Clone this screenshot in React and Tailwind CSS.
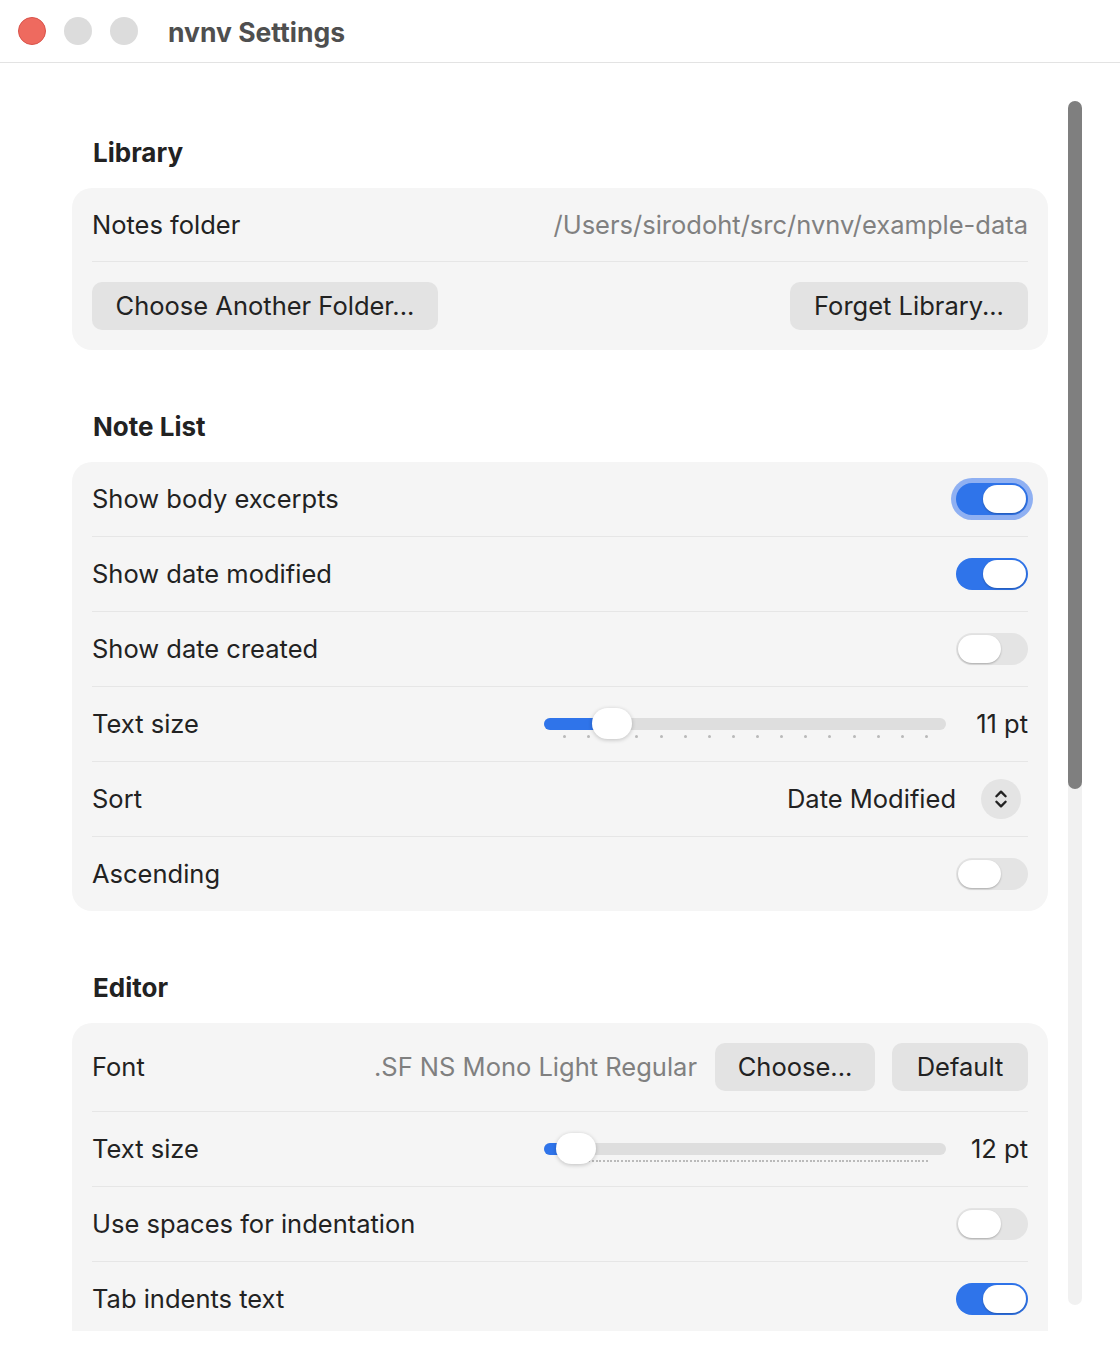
import { ChevronsUpDown } from 'lucide-react';

const font = { fontFamily: 'Inter, "Noto Sans", sans-serif' };

// the switch keeps a 5px box for its focus ring, pulled back with a negative margin
const Toggle = ({ on, focused }) => (
  <div className={`-m-[5px] rounded-full p-[5px] ${focused ? 'bg-[#8fb0f2]' : ''}`}>
    <div
      className={`flex h-[32px] w-[72px] items-center rounded-full px-[2px] ${
        on ? 'justify-end bg-[#2f74ea]' : 'justify-start bg-[#e4e4e4]'
      }`}
    >
      <div className="h-[28px] w-[43px] rounded-full bg-white shadow-[0_1px_2px_rgba(0,0,0,0.25)]" />
    </div>
  </div>
);

const Slider = ({ value, ticks, knobAt }) => (
  <div className="flex items-start gap-[19px]">
    <div className="relative h-[40px] w-[402px]">
      <div className="absolute left-0 right-0 top-[10px] h-[12px] rounded-full bg-[#dedede]" />
      <div
        className="absolute left-0 top-[10px] h-[12px] rounded-full bg-[#2f74ea]"
        style={{ width: knobAt + 20 }}
      />
      <div className="absolute left-[19px] right-[18px] top-[27px] flex justify-between">
        {Array.from({ length: ticks }).map((_, i) => (
          <span
            key={i}
            className={`rounded-full ${ticks > 30 ? 'h-[2px] w-[2px] bg-[#a6a6a6]' : 'h-[3px] w-[3px] bg-[#b9b9b9]'}`}
          />
        ))}
      </div>
      <div
        className="absolute top-0 h-[31px] w-[40px] rounded-full bg-white shadow-[0_1px_4px_rgba(0,0,0,0.22)]"
        style={{ left: knobAt }}
      />
    </div>
    <span className="h-[32px] w-[63px] text-right text-[25.5px] leading-[32px] text-[#222]">{value}</span>
  </div>
);

const Divider = () => <div className="h-px bg-[#e6e6e6]" />;

const Row = ({ label, children, last }) => (
  <>
    <div className="flex h-[74px] items-center justify-between">
      <span className="text-[25.5px] text-[#222]">{label}</span>
      {children}
    </div>
    {!last && <Divider />}
  </>
);

const Button = ({ children, className = '' }) => (
  <button className={`h-[48px] rounded-[10px] bg-[#e3e3e3] text-[25.5px] text-[#222] ${className}`}>
    {children}
  </button>
);

const Section = ({ title, first, className = '', children }) => (
  <section className={first ? '' : 'mt-[62px]'}>
    <h2 className="mb-[20px] h-[30px] pl-[21px] text-[26px] font-bold leading-[30px] text-[#222]">{title}</h2>
    <div className={`rounded-[20px] bg-[#f5f5f5] px-[20px] ${className}`}>{children}</div>
  </section>
);

export default function App() {
  return (
    <div className="h-[1364px] w-[1120px] overflow-hidden bg-white" style={font}>
      {/* title bar */}
      <div className="flex h-[63px] items-center border-b border-[#e3e3e3]">
        <div className="ml-[18px] flex gap-[18px]">
          <span className="h-[28px] w-[28px] rounded-full border border-[#d9534a] bg-[#ee6a5f]" />
          <span className="h-[28px] w-[28px] rounded-full bg-[#dcdcdc]" />
          <span className="h-[28px] w-[28px] rounded-full bg-[#dcdcdc]" />
        </div>
        <span className="ml-[30px] mt-[4px] text-[26.5px] font-bold text-[#4f4f4f]">nvnv Settings</span>
      </div>

      <div className="flex h-[1268px] overflow-hidden">
        <div className="w-[1048px] shrink-0 pl-[72px] pt-[75px]">
          <Section title="Library" first>
            <div className="flex h-[73px] items-center justify-between pt-[2px]">
              <span className="text-[25.5px] text-[#222]">Notes folder</span>
              <span className="text-[25.5px] text-[#808080]">/Users/sirodoht/src/nvnv/example-data</span>
            </div>
            <Divider />
            <div className="flex items-center justify-between py-[20px]">
              <Button className="w-[346px]">Choose Another Folder...</Button>
              <Button className="w-[238px]">Forget Library...</Button>
            </div>
          </Section>

          <Section title="Note List">
            <Row label="Show body excerpts">
              <Toggle on focused />
            </Row>
            <Row label="Show date modified">
              <Toggle on />
            </Row>
            <Row label="Show date created">
              <Toggle />
            </Row>
            <Row label="Text size">
              <div className="pt-[8px]">
                <Slider value="11 pt" ticks={16} knobAt={48} />
              </div>
            </Row>
            <Row label="Sort">
              <div className="mr-[7px] flex items-center gap-[25px]">
                <span className="text-[25.5px] text-[#222]">Date Modified</span>
                <span className="flex h-[40px] w-[40px] items-center justify-center rounded-full bg-[#e4e4e4]">
                  <ChevronsUpDown size={22} strokeWidth={2.6} color="#222" />
                </span>
              </div>
            </Row>
            <Row label="Ascending" last>
              <Toggle />
            </Row>
          </Section>

          <Section title="Editor" className="pb-[40px]">
            <div className="flex items-center justify-between py-[20px]">
              <span className="text-[25.5px] text-[#222]">Font</span>
              <div className="flex items-center">
                <span className="mr-[18px] text-[25.5px] text-[#808080]">.SF NS Mono Light Regular</span>
                <Button className="w-[160px]">Choose...</Button>
                <Button className="ml-[17px] w-[136px]">Default</Button>
              </div>
            </div>
            <Divider />
            <Row label="Text size">
              <div className="pt-[8px]">
                <Slider value="12 pt" ticks={101} knobAt={12} />
              </div>
            </Row>
            <Row label="Use spaces for indentation">
              <Toggle />
            </Row>
            <Row label="Tab indents text" last>
              <Toggle on />
            </Row>
          </Section>
        </div>

        {/* scrollbar */}
        <div className="ml-[20px] mt-[38px] h-[1204px] w-[14px] rounded-full bg-[#f1f1f1]">
          <div className="h-[688px] w-[14px] rounded-full bg-[#7f7f7f]" />
        </div>
      </div>
    </div>
  );
}
